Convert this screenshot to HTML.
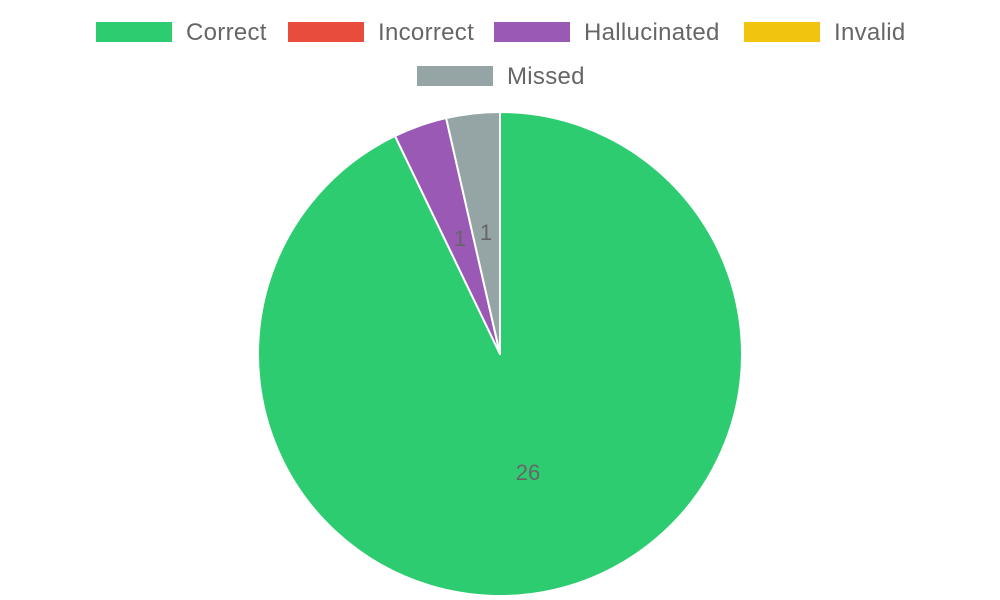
<!DOCTYPE html>
<html><head><meta charset="utf-8"><style>
html,body{margin:0;padding:0;background:#fff;width:1000px;height:600px;overflow:hidden}
svg{display:block}
text{font-family:"Liberation Sans",sans-serif;fill:#666}
.l{letter-spacing:0.3px;font-size:24px}
</style></head><body>
<svg width="1000" height="600" viewBox="0 0 1000 600">
<rect x="96" y="22" width="76" height="20" fill="#2ecc71"/>
<text class="l" x="186" y="40">Correct</text>
<rect x="288" y="22" width="76" height="20" fill="#e74c3c"/>
<text class="l" x="378" y="40">Incorrect</text>
<rect x="494" y="22" width="76" height="20" fill="#9b59b6"/>
<text class="l" x="584" y="40">Hallucinated</text>
<rect x="744" y="22" width="76" height="20" fill="#f1c40f"/>
<text class="l" x="834" y="40">Invalid</text>
<rect x="417" y="66" width="76" height="20" fill="#95a5a6"/>
<text class="l" x="507" y="84">Missed</text>

<g stroke="#fff" stroke-width="2" stroke-linejoin="round">
<path d="M500 354 L500 112 A242 242 0 1 1 395.0 135.96 Z" fill="#2ecc71"/>
<path d="M500 354 L395.0 135.96 A242 242 0 0 1 446.15 118.07 Z" fill="#9b59b6"/>
<path d="M500 354 L446.15 118.07 A242 242 0 0 1 500 112 Z" fill="#95a5a6"/>
</g>
<text x="528" y="480" font-size="22" text-anchor="middle">26</text>
<text x="460" y="246" font-size="22" text-anchor="middle">1</text>
<text x="486" y="240" font-size="22" text-anchor="middle">1</text>
</svg>
</body></html>
